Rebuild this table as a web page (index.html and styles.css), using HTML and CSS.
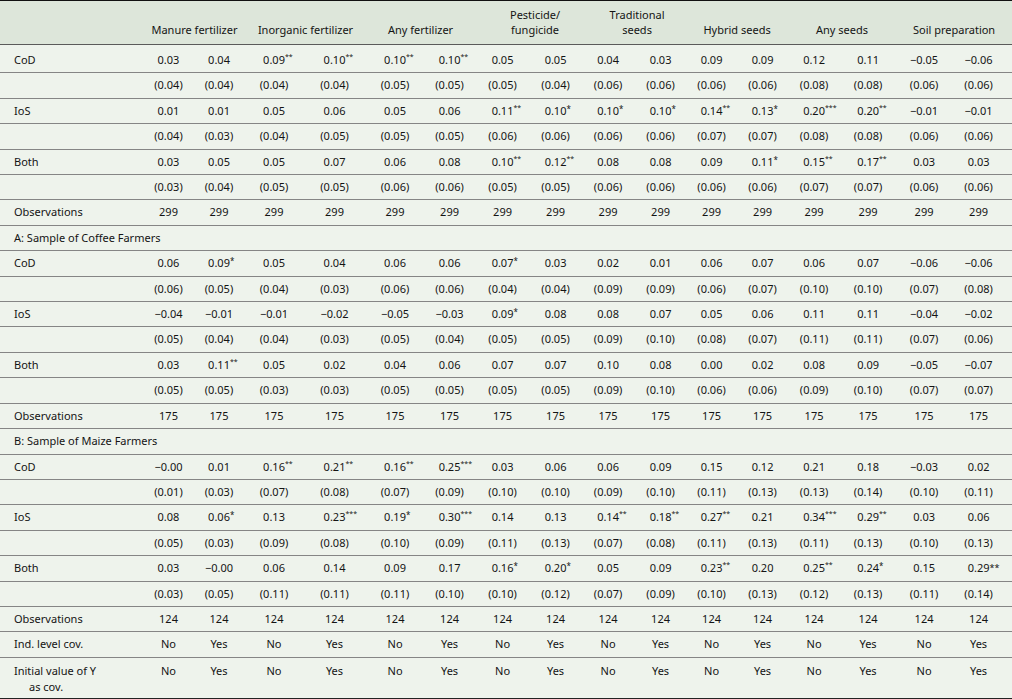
FILE: index.html
```html
<!DOCTYPE html>
<html lang="en">
<head>
<meta charset="utf-8">
<title>Regression table</title>
<link rel="stylesheet" href="styles.css">
</head>
<body>
<table class="tbl">
  <colgroup>
    <col class="c-lab">
    <col class="w49"><col class="w52"><col class="w58"><col class="w63">
    <col class="w58"><col class="w51"><col class="w55"><col class="w51">
    <col class="w54"><col class="w51"><col class="w51"><col class="w51">
    <col class="w52"><col class="w56"><col class="w56"><col class="w60">
  </colgroup>
  <thead>
    <tr>
      <th></th>
      <th colspan="2">Manure fertilizer</th>
      <th colspan="2">Inorganic fertilizer</th>
      <th colspan="2">Any fertilizer</th>
      <th colspan="2" class="sh-14">Pesticide/<br>fungicide</th>
      <th colspan="2" class="sh-7">Traditional<br>seeds</th>
      <th colspan="2">Hybrid seeds</th>
      <th colspan="2">Any seeds</th>
      <th colspan="2">Soil preparation</th>
    </tr>
  </thead>
  <tbody>
    <tr class="first"><td class="lab">CoD</td><td>0.03</td><td>0.04</td><td>0.09<sup class="s">**</sup></td><td>0.10<sup class="s">**</sup></td><td>0.10<sup class="s">**</sup></td><td>0.10<sup class="s">**</sup></td><td>0.05</td><td>0.05</td><td>0.04</td><td>0.03</td><td>0.09</td><td>0.09</td><td>0.12</td><td>0.11</td><td>−0.05</td><td class="end">−0.06</td></tr>
    <tr><td class="lab"></td><td>(0.04)</td><td>(0.04)</td><td>(0.04)</td><td>(0.04)</td><td>(0.05)</td><td>(0.05)</td><td>(0.05)</td><td>(0.04)</td><td>(0.06)</td><td>(0.06)</td><td>(0.06)</td><td>(0.06)</td><td>(0.08)</td><td>(0.08)</td><td>(0.06)</td><td class="end">(0.06)</td></tr>
    <tr><td class="lab">IoS</td><td>0.01</td><td>0.01</td><td>0.05</td><td>0.06</td><td>0.05</td><td>0.06</td><td>0.11<sup class="s">**</sup></td><td>0.10<sup class="s1">*</sup></td><td>0.10<sup class="s1">*</sup></td><td>0.10<sup class="s1">*</sup></td><td>0.14<sup class="s">**</sup></td><td>0.13<sup class="s1">*</sup></td><td>0.20<sup class="s">***</sup></td><td>0.20<sup class="s">**</sup></td><td>−0.01</td><td class="end">−0.01</td></tr>
    <tr><td class="lab"></td><td>(0.04)</td><td>(0.03)</td><td>(0.04)</td><td>(0.05)</td><td>(0.05)</td><td>(0.05)</td><td>(0.06)</td><td>(0.06)</td><td>(0.06)</td><td>(0.06)</td><td>(0.07)</td><td>(0.07)</td><td>(0.08)</td><td>(0.08)</td><td>(0.06)</td><td class="end">(0.06)</td></tr>
    <tr><td class="lab">Both</td><td>0.03</td><td>0.05</td><td>0.05</td><td>0.07</td><td>0.06</td><td>0.08</td><td>0.10<sup class="s">**</sup></td><td>0.12<sup class="s">**</sup></td><td>0.08</td><td>0.08</td><td>0.09</td><td>0.11<sup class="s1">*</sup></td><td>0.15<sup class="s">**</sup></td><td>0.17<sup class="s">**</sup></td><td>0.03</td><td class="end">0.03</td></tr>
    <tr><td class="lab"></td><td>(0.03)</td><td>(0.04)</td><td>(0.05)</td><td>(0.05)</td><td>(0.06)</td><td>(0.06)</td><td>(0.05)</td><td>(0.05)</td><td>(0.06)</td><td>(0.06)</td><td>(0.06)</td><td>(0.06)</td><td>(0.07)</td><td>(0.07)</td><td>(0.06)</td><td class="end">(0.06)</td></tr>
    <tr><td class="lab">Observations</td><td>299</td><td>299</td><td>299</td><td>299</td><td>299</td><td>299</td><td>299</td><td>299</td><td>299</td><td>299</td><td>299</td><td>299</td><td>299</td><td>299</td><td>299</td><td class="end">299</td></tr>
    <tr><td class="lab" colspan="17">A: Sample of Coffee Farmers</td></tr>
    <tr><td class="lab">CoD</td><td>0.06</td><td>0.09<sup class="s1">*</sup></td><td>0.05</td><td>0.04</td><td>0.06</td><td>0.06</td><td>0.07<sup class="s1">*</sup></td><td>0.03</td><td>0.02</td><td>0.01</td><td>0.06</td><td>0.07</td><td>0.06</td><td>0.07</td><td>−0.06</td><td class="end">−0.06</td></tr>
    <tr><td class="lab"></td><td>(0.06)</td><td>(0.05)</td><td>(0.04)</td><td>(0.03)</td><td>(0.06)</td><td>(0.06)</td><td>(0.04)</td><td>(0.04)</td><td>(0.09)</td><td>(0.09)</td><td>(0.06)</td><td>(0.07)</td><td>(0.10)</td><td>(0.10)</td><td>(0.07)</td><td class="end">(0.08)</td></tr>
    <tr><td class="lab">IoS</td><td>−0.04</td><td>−0.01</td><td>−0.01</td><td>−0.02</td><td>−0.05</td><td>−0.03</td><td>0.09<sup class="s1">*</sup></td><td>0.08</td><td>0.08</td><td>0.07</td><td>0.05</td><td>0.06</td><td>0.11</td><td>0.11</td><td>−0.04</td><td class="end">−0.02</td></tr>
    <tr><td class="lab"></td><td>(0.05)</td><td>(0.04)</td><td>(0.04)</td><td>(0.03)</td><td>(0.05)</td><td>(0.04)</td><td>(0.05)</td><td>(0.05)</td><td>(0.09)</td><td>(0.10)</td><td>(0.08)</td><td>(0.07)</td><td>(0.11)</td><td>(0.11)</td><td>(0.07)</td><td class="end">(0.06)</td></tr>
    <tr><td class="lab">Both</td><td>0.03</td><td>0.11<sup class="s">**</sup></td><td>0.05</td><td>0.02</td><td>0.04</td><td>0.06</td><td>0.07</td><td>0.07</td><td>0.10</td><td>0.08</td><td>0.00</td><td>0.02</td><td>0.08</td><td>0.09</td><td>−0.05</td><td class="end">−0.07</td></tr>
    <tr><td class="lab"></td><td>(0.05)</td><td>(0.05)</td><td>(0.03)</td><td>(0.03)</td><td>(0.05)</td><td>(0.05)</td><td>(0.05)</td><td>(0.05)</td><td>(0.09)</td><td>(0.10)</td><td>(0.06)</td><td>(0.06)</td><td>(0.09)</td><td>(0.10)</td><td>(0.07)</td><td class="end">(0.07)</td></tr>
    <tr><td class="lab">Observations</td><td>175</td><td>175</td><td>175</td><td>175</td><td>175</td><td>175</td><td>175</td><td>175</td><td>175</td><td>175</td><td>175</td><td>175</td><td>175</td><td>175</td><td>175</td><td class="end">175</td></tr>
    <tr><td class="lab" colspan="17">B: Sample of Maize Farmers</td></tr>
    <tr><td class="lab">CoD</td><td>−0.00</td><td>0.01</td><td>0.16<sup class="s">**</sup></td><td>0.21<sup class="s">**</sup></td><td>0.16<sup class="s">**</sup></td><td>0.25<sup class="s">***</sup></td><td>0.03</td><td>0.06</td><td>0.06</td><td>0.09</td><td>0.15</td><td>0.12</td><td>0.21</td><td>0.18</td><td>−0.03</td><td class="end">0.02</td></tr>
    <tr><td class="lab"></td><td>(0.01)</td><td>(0.03)</td><td>(0.07)</td><td>(0.08)</td><td>(0.07)</td><td>(0.09)</td><td>(0.10)</td><td>(0.10)</td><td>(0.09)</td><td>(0.10)</td><td>(0.11)</td><td>(0.13)</td><td>(0.13)</td><td>(0.14)</td><td>(0.10)</td><td class="end">(0.11)</td></tr>
    <tr><td class="lab">IoS</td><td>0.08</td><td>0.06<sup class="s1">*</sup></td><td>0.13</td><td>0.23<sup class="s">***</sup></td><td>0.19<sup class="s1">*</sup></td><td>0.30<sup class="s">***</sup></td><td>0.14</td><td>0.13</td><td>0.14<sup class="s">**</sup></td><td>0.18<sup class="s">**</sup></td><td>0.27<sup class="s">**</sup></td><td>0.21</td><td>0.34<sup class="s">***</sup></td><td>0.29<sup class="s">**</sup></td><td>0.03</td><td class="end">0.06</td></tr>
    <tr><td class="lab"></td><td>(0.05)</td><td>(0.03)</td><td>(0.09)</td><td>(0.08)</td><td>(0.10)</td><td>(0.09)</td><td>(0.11)</td><td>(0.13)</td><td>(0.07)</td><td>(0.08)</td><td>(0.11)</td><td>(0.13)</td><td>(0.11)</td><td>(0.13)</td><td>(0.10)</td><td class="end">(0.13)</td></tr>
    <tr><td class="lab">Both</td><td>0.03</td><td>−0.00</td><td>0.06</td><td>0.14</td><td>0.09</td><td>0.17</td><td>0.16<sup class="s1">*</sup></td><td>0.20<sup class="s1">*</sup></td><td>0.05</td><td>0.09</td><td>0.23<sup class="s">**</sup></td><td>0.20</td><td>0.25<sup class="s">**</sup></td><td>0.24<sup class="s1">*</sup></td><td>0.15</td><td class="end">0.29<span class="s2">**</span></td></tr>
    <tr><td class="lab"></td><td>(0.03)</td><td>(0.05)</td><td>(0.11)</td><td>(0.11)</td><td>(0.11)</td><td>(0.10)</td><td>(0.10)</td><td>(0.12)</td><td>(0.07)</td><td>(0.09)</td><td>(0.10)</td><td>(0.13)</td><td>(0.12)</td><td>(0.13)</td><td>(0.11)</td><td class="end">(0.14)</td></tr>
    <tr><td class="lab">Observations</td><td>124</td><td>124</td><td>124</td><td>124</td><td>124</td><td>124</td><td>124</td><td>124</td><td>124</td><td>124</td><td>124</td><td>124</td><td>124</td><td>124</td><td>124</td><td class="end">124</td></tr>
    <tr><td class="lab">Ind. level cov.</td><td>No</td><td>Yes</td><td>No</td><td>Yes</td><td>No</td><td>Yes</td><td>No</td><td>Yes</td><td>No</td><td>Yes</td><td>No</td><td>Yes</td><td>No</td><td>Yes</td><td>No</td><td class="end">Yes</td></tr>
    <tr class="last"><td class="lab hang">Initial value of Y<br>as cov.</td><td>No</td><td>Yes</td><td>No</td><td>Yes</td><td>No</td><td>Yes</td><td>No</td><td>Yes</td><td>No</td><td>Yes</td><td>No</td><td>Yes</td><td>No</td><td>Yes</td><td>No</td><td class="end">Yes</td></tr>
  </tbody>
</table>
</body>
</html>
```

FILE: styles.css
```css
html, body {
  margin: 0;
  padding: 0;
  background: #eef3ec;
}

.tbl {
  width: 1012px;
  table-layout: fixed;
  border-collapse: separate;
  border-spacing: 0;
  font-family: "Noto Sans", "Open Sans", sans-serif;
  font-size: 11px;
  color: #141414;
  background: #eef3ec;
  border-top: 1px solid #111;
}

.c-lab { width: 144px; }
.w49 { width: 49px; }
.w51 { width: 51px; }
.w52 { width: 52px; }
.w54 { width: 54px; }
.w55 { width: 55px; }
.w56 { width: 56px; }
.w58 { width: 58px; }
.w60 { width: 60px; }
.w63 { width: 63px; }

.tbl th {
  background: #dde6da;
  font-weight: normal;
  line-height: 15px;
  padding: 6px 0 7px;
  vertical-align: bottom;
  text-align: center;
  border-bottom: 1px solid #5a5a5a;
}

.tbl th.sh-14 { padding-left: 14px; }
.tbl th.sh-7 { padding-left: 7px; }

.tbl td {
  text-align: center;
  line-height: 14.4px;
  padding: 5px 0;
  border-bottom: 1px solid #858585;
  white-space: nowrap;
}

.tbl td.end {
  padding-right: 7px;
}

.tbl tr.first td {
  padding-top: 8px;
}

.tbl td.lab {
  text-align: left;
  padding-left: 14px;
  padding-right: 0;
}

.tbl td.hang {
  padding-left: 29px;
  text-indent: -15px;
  white-space: normal;
}

.tbl tr.last td {
  vertical-align: top;
  line-height: 16px;
  padding-bottom: 3px;
  border-bottom: 1px solid #222;
}

.s, .s1 {
  display: inline-block;
  width: 0;
  font-size: 7px;
  line-height: 0;
  vertical-align: 5px;
}

.s1 {
  font-size: 8px;
  vertical-align: 3px;
}

.s2 {
  display: inline-block;
  width: 0;
  font-size: 9px;
  line-height: 0;
  vertical-align: 1px;
}
```
